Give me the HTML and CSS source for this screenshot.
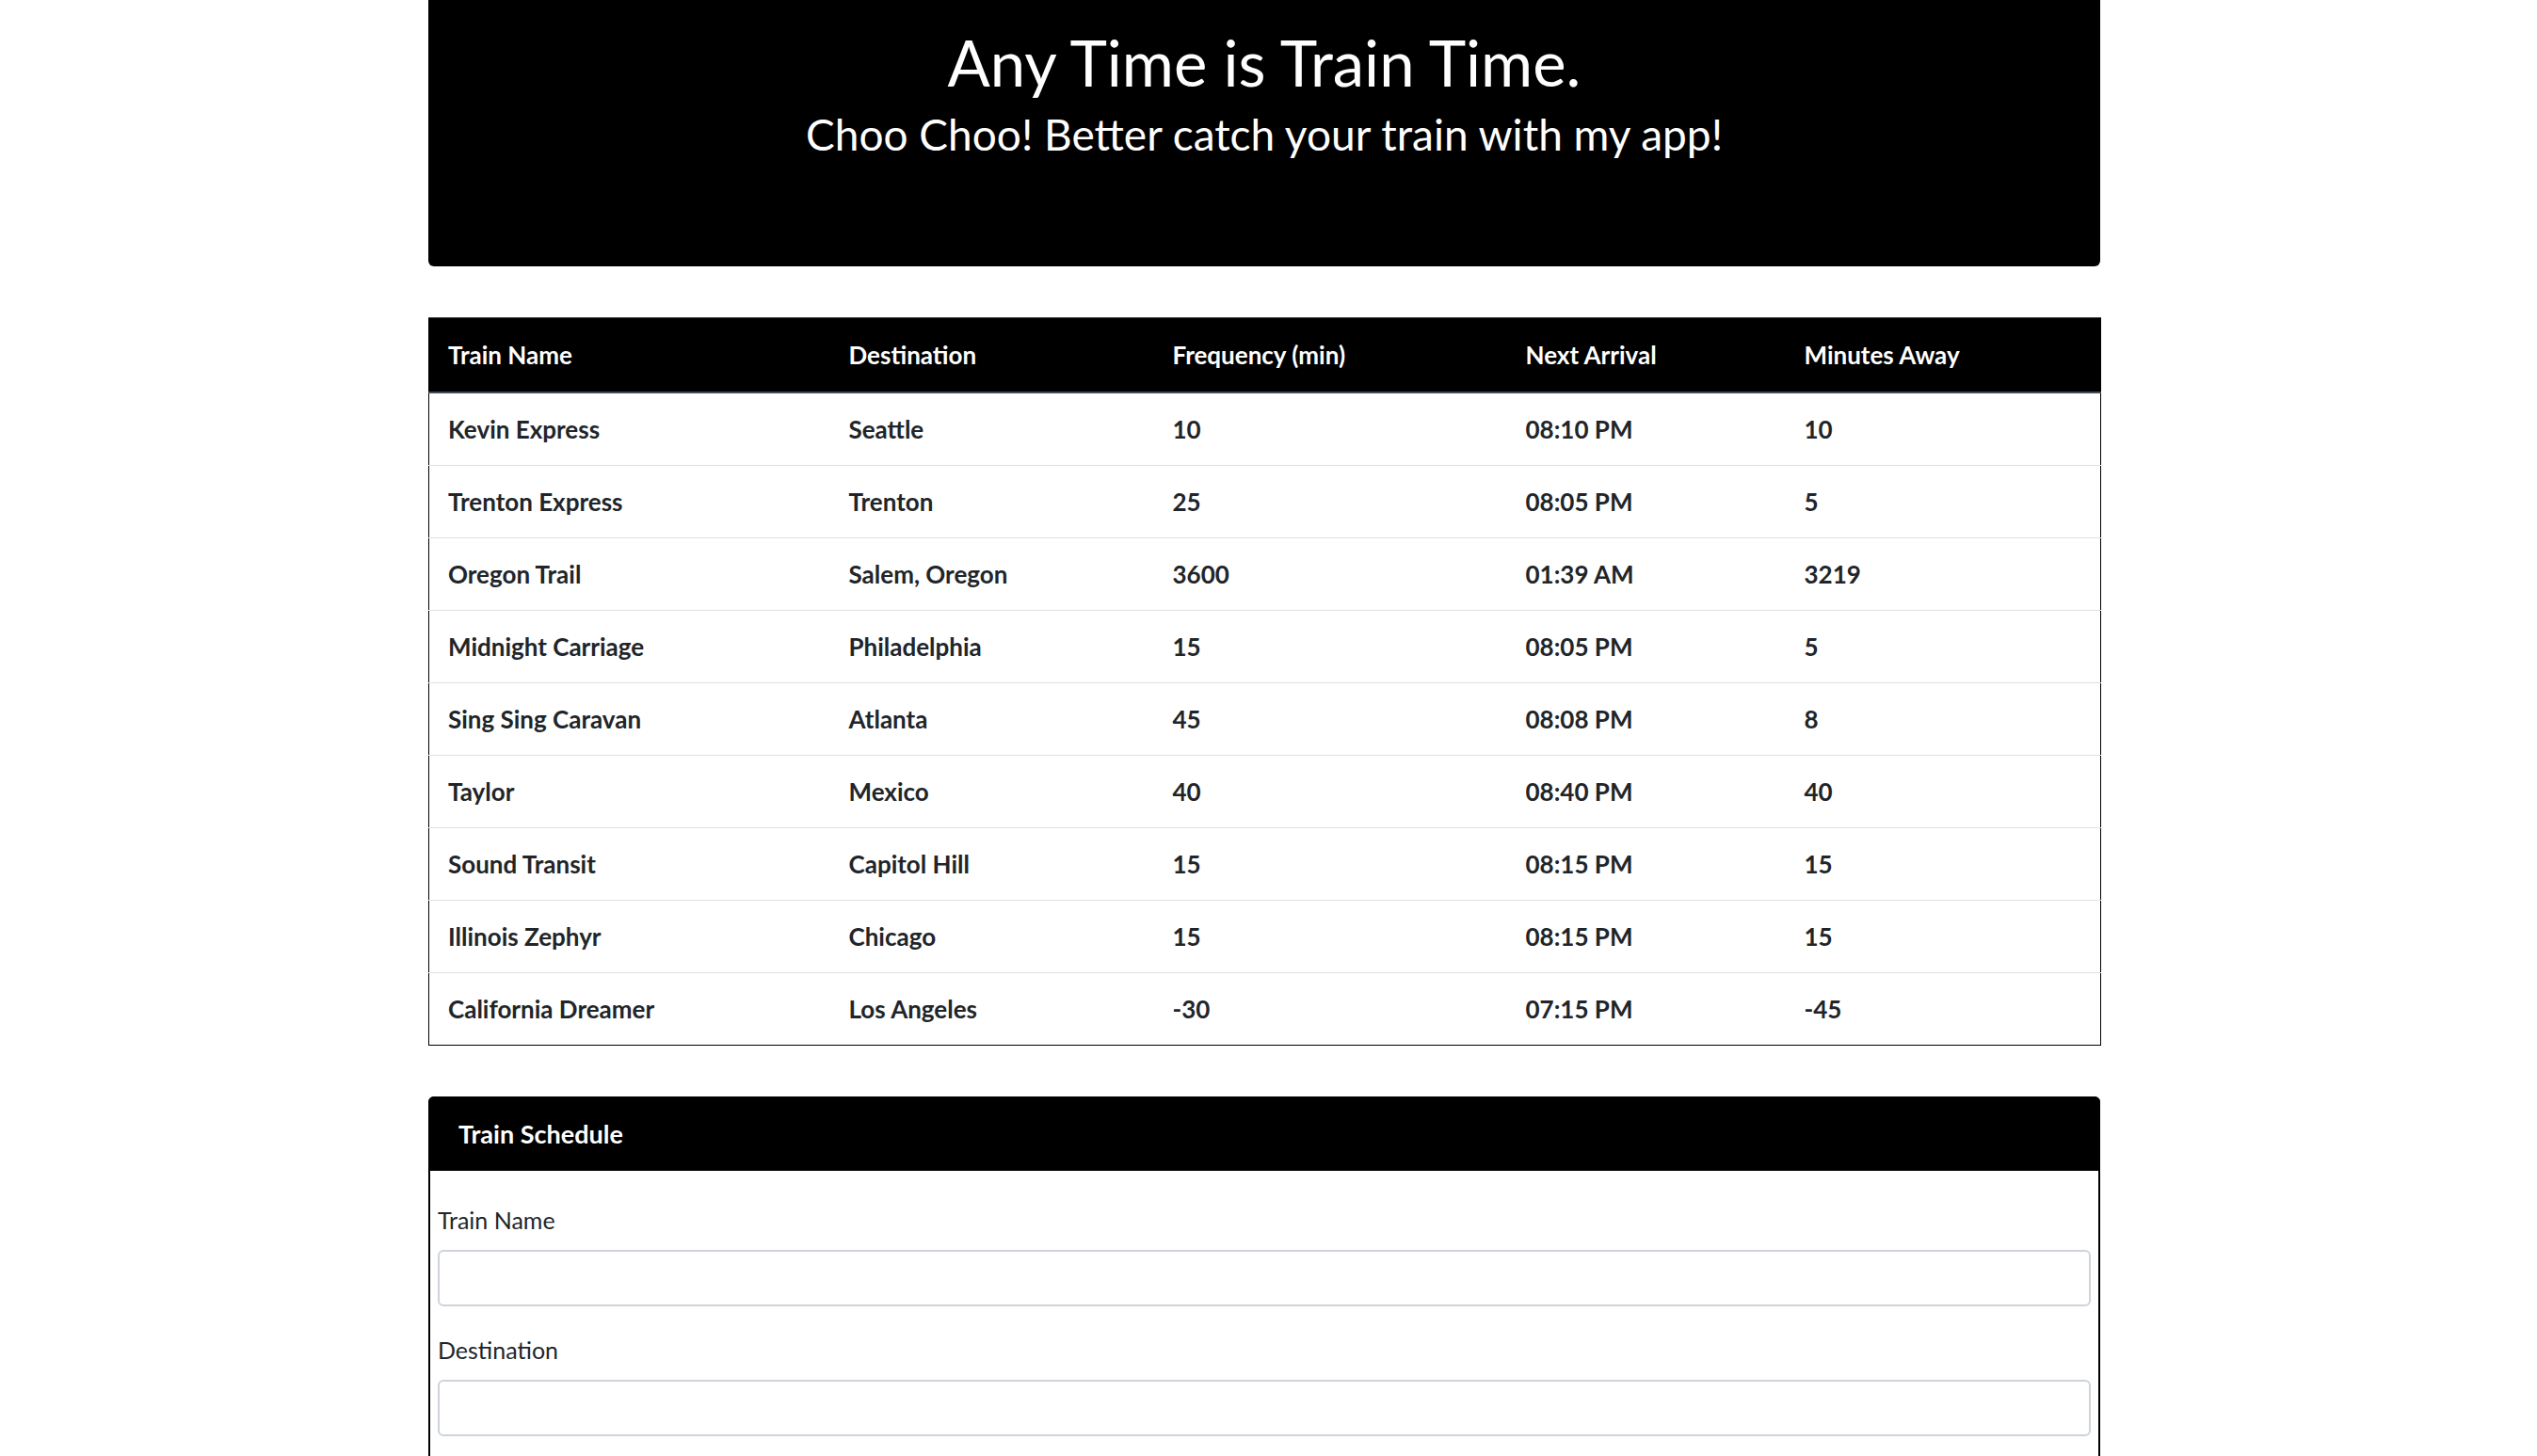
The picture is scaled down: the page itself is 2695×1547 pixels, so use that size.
FILE: index.html
```html
<!DOCTYPE html>
<html lang="en">
<head>
<meta charset="utf-8">
<title>Train Time</title>
<link rel="stylesheet" href="styles.css">
</head>
<body>
<div class="container">
  <header class="jumbotron">
    <h1 class="title">Any Time is Train Time.</h1>
    <p class="lead">Choo Choo! Better catch your train with my app!</p>
  </header>

  <table class="trains">
    <thead>
      <tr>
        <th class="c1">Train Name</th>
        <th class="c2">Destination</th>
        <th class="c3">Frequency (min)</th>
        <th class="c4">Next Arrival</th>
        <th class="c5">Minutes Away</th>
      </tr>
    </thead>
    <tbody>
      <tr><td>Kevin Express</td><td>Seattle</td><td>10</td><td>08:10 PM</td><td>10</td></tr>
      <tr><td>Trenton Express</td><td>Trenton</td><td>25</td><td>08:05 PM</td><td>5</td></tr>
      <tr><td>Oregon Trail</td><td>Salem, Oregon</td><td>3600</td><td>01:39 AM</td><td>3219</td></tr>
      <tr><td>Midnight Carriage</td><td>Philadelphia</td><td>15</td><td>08:05 PM</td><td>5</td></tr>
      <tr><td>Sing Sing Caravan</td><td>Atlanta</td><td>45</td><td>08:08 PM</td><td>8</td></tr>
      <tr><td>Taylor</td><td>Mexico</td><td>40</td><td>08:40 PM</td><td>40</td></tr>
      <tr><td>Sound Transit</td><td>Capitol Hill</td><td>15</td><td>08:15 PM</td><td>15</td></tr>
      <tr><td>Illinois Zephyr</td><td>Chicago</td><td>15</td><td>08:15 PM</td><td>15</td></tr>
      <tr><td>California Dreamer</td><td>Los Angeles</td><td>-30</td><td>07:15 PM</td><td>-45</td></tr>
    </tbody>
  </table>

  <section class="card">
    <div class="card-header">Train Schedule</div>
    <form class="card-body">
      <div class="form-group">
        <label for="train-name">Train Name</label>
        <input id="train-name" class="form-control" type="text">
      </div>
      <div class="form-group">
        <label for="destination">Destination</label>
        <input id="destination" class="form-control" type="text">
      </div>
    </form>
  </section>
</div>
</body>
</html>
```

FILE: styles.css
```css
* { box-sizing: border-box; }

html, body {
  margin: 0;
  padding: 0;
  background: #fff;
}

body {
  font-family: Lato, "Open Sans", "Liberation Sans", sans-serif;
  color: #212529;
  padding-right: 9px;
}

.container {
  width: 1776px;
  margin: 0 auto;
}

.jumbotron {
  background: #000;
  color: #fff;
  height: 283px;
  border-radius: 0 0 6px 6px;
  text-align: center;
  padding-top: 26px;
}

.title {
  margin: 0;
  font-size: 67px;
  font-weight: 400;
  line-height: 1.2;
}

.lead {
  margin: 9px 0 0;
  font-size: 46px;
  font-weight: 400;
  line-height: 1.2;
}

.trains {
  width: 100%;
  margin-top: 54px;
  border-collapse: collapse;
  table-layout: fixed;
  border: 1px solid #000;
  font-size: 26px;
  font-weight: 700;
  line-height: 36px;
}

.trains th {
  background: #000;
  color: #fff;
  text-align: left;
  padding: 21px 20px;
  border-top: 1px solid #454d55;
  border-bottom: 2px solid #454d55;
}

.trains td {
  padding: 20px;
  border-top: 1px solid #dee2e6;
  color: #212529;
}

.c1 { width: 426px; }
.c2 { width: 344px; }
.c3 { width: 375px; }
.c4 { width: 296px; }
.c5 { width: 335px; }

.card {
  margin-top: 54px;
  border: 2px solid #000;
  border-radius: 6px;
}

.card-header {
  background: #000;
  color: #fff;
  font-size: 27px;
  font-weight: 700;
  height: 79px;
  line-height: 79px;
  padding: 0 32px;
  margin: -2px -2px 0;
  border-radius: 6px 6px 0 0;
}

.card-body {
  display: block;
  padding: 34px 8px 60px;
}

.form-group {
  margin-bottom: 28px;
}

.form-group label {
  display: block;
  font-size: 25px;
  line-height: 36px;
  margin-bottom: 14px;
  color: #212529;
}

.form-control {
  display: block;
  width: 100%;
  height: 60px;
  border: 2px solid #ced4da;
  border-radius: 6px;
  background: #fff;
  font: inherit;
  font-size: 24px;
  padding: 0 18px;
}
```
